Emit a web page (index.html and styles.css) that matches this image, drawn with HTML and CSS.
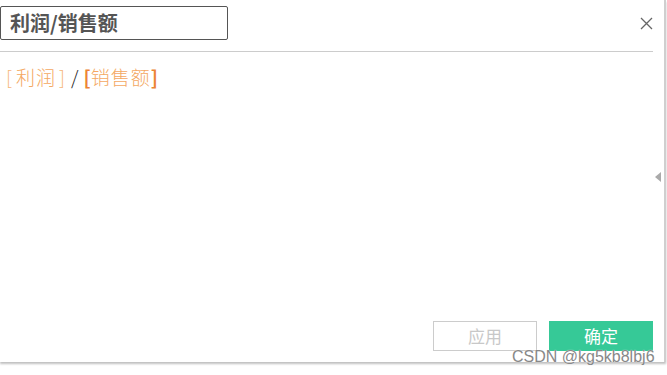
FILE: index.html
```html
<!DOCTYPE html>
<html lang="zh">
<head>
<meta charset="utf-8">
<link rel="stylesheet" href="styles.css">
</head>
<body>
<div class="panel">
  <div class="header">
    <div class="name-box">利润/销售额</div>
    <svg class="close" width="13" height="13" viewBox="0 0 13 13"><path d="M1 1L12 12M12 1L1 12" stroke="#666" stroke-width="1.3" fill="none"/></svg>
  </div>
  <div class="divider"></div>
  <div class="formula"><span class="b1">[</span><span class="f1">利润</span><span class="b1">]</span><span class="slash">/</span><span class="b2">[</span><span class="f2">销售额</span><span class="b2">]</span></div>
  <div class="spacer"></div>
  <div class="footer">
    <button class="btn btn-apply">应用</button>
    <button class="btn btn-ok">确定</button>
  </div>
  <div class="handle"></div>
</div>
<div class="watermark">CSDN @kg5kb8lbj6</div>
</body>
</html>
```
FILE: styles.css
```css
html, body {
  margin: 0;
  padding: 0;
  background: #fff;
  width: 667px;
  height: 375px;
  overflow: hidden;
}
body {
  position: relative;
  font-family: "Noto Sans CJK SC", "Noto Sans", sans-serif;
}
.panel {
  position: relative;
  width: 664px;
  height: 362px;
  border-right: 2px solid #cfcfcf;
  box-shadow: 0 2px 2px rgba(0,0,0,0.25);
  display: flex;
  flex-direction: column;
}
.header {
  height: 51px;
  display: flex;
  align-items: flex-start;
  justify-content: space-between;
  padding-top: 6px;
  box-sizing: border-box;
}
.name-box {
  width: 228px;
  height: 34px;
  box-sizing: border-box;
  border: 1px solid #555;
  border-radius: 2px;
  font-weight: bold;
  font-size: 20px;
  color: #555;
  line-height: 31px;
  padding-left: 9px;
}
.close {
  margin-top: 11px;
  margin-right: 11px;
}
.divider {
  width: 653px;
  height: 1px;
  background: #ccc;
}
.formula {
  padding: 12px 0 0 6px;
  font-size: 19px;
  font-weight: 300;
  line-height: 26px;
  color: #f2a55e;
  display: flex;
  align-items: baseline;
}
.b1 { color: #f6b57a; font-weight: 200; margin: 0 3px; }
.b1:first-child { margin-left: 0; margin-right: 4px; }
.f1 { color: #f4a862; letter-spacing: 1px; }
.slash { color: #222; margin: 0 5px 0 3px; font-weight: 300; }
.b2 { color: #ec8434; font-weight: bold; }
.b2:first-of-type { margin-right: 4px; }
.f2 { color: #f4a862; letter-spacing: 1px; }
.spacer { flex: 1; }
.footer {
  display: flex;
  justify-content: flex-end;
  gap: 12px;
  padding-right: 11px;
  padding-bottom: 11px;
}
.btn {
  width: 104px;
  height: 30px;
  font-family: "Noto Sans CJK SC", sans-serif;
  font-size: 17px;
  padding: 0;
  border-radius: 0;
  line-height: 28px;
}
.btn-apply {
  background: #fff;
  border: 1px solid #ccc;
  color: #c8c8c8;
}
.btn-ok {
  background: #36c997;
  border: 1px solid #36c997;
  color: #fff;
}
.handle {
  position: absolute;
  left: 655px;
  top: 172px;
  width: 0;
  height: 0;
  border-top: 5px solid transparent;
  border-bottom: 5px solid transparent;
  border-right: 6px solid #aaa;
}
.watermark {
  position: absolute;
  left: 512px;
  top: 348px;
  font-family: "Liberation Sans", Arial, sans-serif;
  font-size: 16px;
  color: #888;
  text-shadow: 0 0 1px #fff;
  line-height: 18px;
  white-space: nowrap;
}
```
